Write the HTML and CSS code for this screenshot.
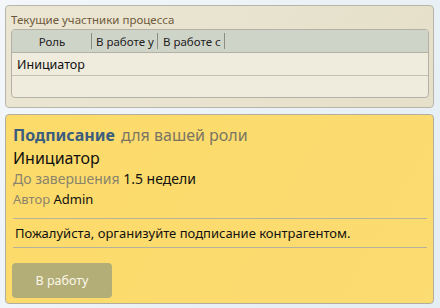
FILE: index.html
```html
<!DOCTYPE html>
<html lang="ru">
<head>
  <meta charset="UTF-8">
  <title>Процесс</title>
  <link rel="stylesheet" href="styles.css">
</head>
<body>
  <div class="page">
    <section class="members-panel">
      <p class="members-title">Текущие участники процесса</p>
      <div class="members-table">
        <div class="table-head">
          <div class="head-cell col-role">Роль</div>
          <div class="head-cell col-at">В работе у</div>
          <div class="head-cell col-since">В работе с</div>
          <div class="head-cell col-rest"></div>
        </div>
        <div class="table-row">Инициатор</div>
        <div class="table-row"></div>
      </div>
    </section>

    <section class="task-panel">
      <h2 class="task-title"><span class="task-name">Подписание</span> <span class="task-role">для вашей роли</span></h2>
      <p class="task-actor">Инициатор</p>
      <p class="task-meta"><span class="meta-label">До завершения</span> 1.5 недели</p>
      <p class="task-author"><span class="meta-label">Автор</span> Admin</p>
      <p class="task-note">Пожалуйста, организуйте подписание контрагентом.</p>
      <button class="task-btn">В работу</button>
    </section>
  </div>
</body>
</html>
```

FILE: styles.css
```css
* {
  margin: 0;
  padding: 0;
  box-sizing: border-box;
  font-family: "Noto Sans", "Open Sans", sans-serif;
}

body {
  background: linear-gradient(120deg, #f3f7fa 0%, #e4eef3 100%);
  width: 440px;
  height: 308px;
  padding: 5px 6px 6px 5px;
}

.page {
  display: flex;
  flex-direction: column;
  gap: 6px;
}

.members-panel {
  background: linear-gradient(120deg, #ebe6d3 0%, #e6e0ca 100%);
  border: 1px solid #b8b5aa;
  border-radius: 4px;
  height: 103px;
  padding: 6px 4px 0 5px;
}

.members-title {
  font-size: 11.5px;
  color: #6e5a3c;
  line-height: 15px;
  margin-bottom: 2px;
}

.members-table {
  border: 1px solid #b3b1a6;
  border-radius: 4px;
  overflow: hidden;
  background: #efebdd;
}

.table-head {
  display: flex;
  height: 23px;
  background: #cfd4c9;
  border-bottom: 1px solid #b3b1a6;
  font-size: 11.5px;
  color: #222;
}

.head-cell {
  display: flex;
  align-items: center;
  padding: 0 3px 0 4px;
  border-right: 1px solid #8c8c84;
  margin: 3px 0;
  white-space: nowrap;
  overflow: hidden;
}

.col-role {
  width: 80px;
  justify-content: center;
}

.col-at {
  width: 66px;
}

.col-since {
  width: 67px;
  padding-left: 5px;
}

.col-rest {
  flex: 1;
  border-right: none;
}

.table-row {
  height: 22px;
  font-size: 12.5px;
  color: #111;
  padding: 0 5px;
  display: flex;
  align-items: center;
}

.table-row + .table-row {
  border-top: 1px solid #c4c1b4;
}

.task-panel {
  background: linear-gradient(120deg, #fddb6a 0%, #fbdc72 100%);
  border: 1px solid #b3ada0;
  border-radius: 4px;
  height: 190px;
  padding: 8px 6px 0 7px;
}

.task-title {
  font-size: 16px;
  font-weight: normal;
  line-height: 24px;
}

.task-name {
  font-weight: bold;
  color: #3b5d7e;
}

.task-role {
  color: #7a7563;
  margin-left: 2px;
}

.task-actor {
  font-size: 16px;
  color: #111;
  line-height: 22px;
}

.task-meta {
  font-size: 14px;
  line-height: 20px;
  color: #111;
}

.task-author {
  font-size: 13px;
  line-height: 20px;
  color: #111;
}

.meta-label {
  color: #8a846c;
}

.task-note {
  margin-top: 9px;
  border-top: 1px solid #b7b29c;
  border-bottom: 1px solid #b7b29c;
  font-size: 13px;
  line-height: 28px;
  padding-left: 2px;
  color: #111;
}

.task-btn {
  display: block;
  margin: 15px 0 0 -1px;
  width: 100px;
  height: 35px;
  border: none;
  border-radius: 4px;
  background: #b3ad78;
  color: #fbf8e8;
  font-size: 12.5px;
}
```
